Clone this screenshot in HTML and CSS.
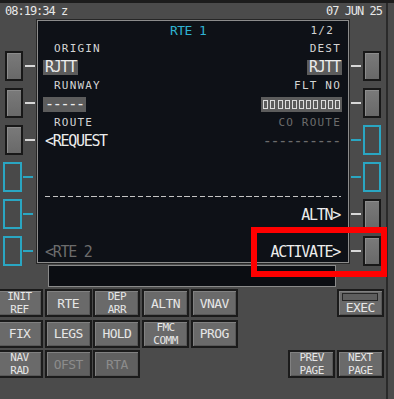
FILE: index.html
```html
<!DOCTYPE html>
<html lang="en">
<head>
  <meta charset="UTF-8">
  <title>FMC RTE 1</title>
  <link rel="stylesheet" href="styles.css">
</head>
<body>

  <div class="fmc">
    <div class="header">
      <span>08:19:34 z</span>
      <span class="date">07 JUN 25</span>
    </div>

    <div class="middle">
      <div class="lsk-col left">
        <div class="lsk"><span class="btn"></span><span class="tick"></span></div>
        <div class="lsk"><span class="btn"></span><span class="tick"></span></div>
        <div class="lsk"><span class="btn"></span><span class="tick"></span></div>
        <div class="lsk cyan"><span class="btn"></span><span class="tick"></span></div>
        <div class="lsk cyan"><span class="btn"></span><span class="tick"></span></div>
        <div class="lsk cyan"><span class="btn"></span><span class="tick"></span></div>
      </div>

      <div class="center">
        <div class="screen">
          <div class="row title">
            <span class="title-text">RTE 1</span>
            <span class="label page">1/2</span>
          </div>
          <div class="row">
            <span class="label indent">ORIGIN</span>
            <span class="label r">DEST</span>
          </div>
          <div class="row">
            <span class="data box">RJTT</span>
            <span class="data box r">RJTT</span>
          </div>
          <div class="row">
            <span class="label indent">RUNWAY</span>
            <span class="label r">FLT NO</span>
          </div>
          <div class="row">
            <span class="data box">-----</span>
            <span class="box squares r">
              <i></i><i></i><i></i><i></i><i></i><i></i><i></i><i></i><i></i><i></i><i></i>
            </span>
          </div>
          <div class="row">
            <span class="label indent">ROUTE</span>
            <span class="label r dim">CO ROUTE</span>
          </div>
          <div class="row">
            <span class="data">&lt;REQUEST</span>
            <span class="data r dim">----------</span>
          </div>
          <div class="row"></div>
          <div class="row"></div>
          <div class="row"><span class="dash-line"></span></div>
          <div class="row">
            <span class="data r">ALTN&gt;</span>
          </div>
          <div class="row"></div>
          <div class="row">
            <span class="data dim">&lt;RTE 2</span>
            <span class="data r">ACTIVATE&gt;</span>
          </div>
        </div>
        <div class="scratchpad"></div>
      </div>

      <div class="lsk-col right">
        <div class="lsk"><span class="tick"></span><span class="btn"></span></div>
        <div class="lsk"><span class="tick"></span><span class="btn"></span></div>
        <div class="lsk cyan"><span class="tick"></span><span class="btn"></span></div>
        <div class="lsk cyan"><span class="tick"></span><span class="btn"></span></div>
        <div class="lsk"><span class="tick"></span><span class="btn"></span></div>
        <div class="lsk"><span class="tick"></span><span class="btn"></span></div>
      </div>
    </div>

    <div class="keypad">
      <div class="key two"><span>INIT</span><span>REF</span></div>
      <div class="key">RTE</div>
      <div class="key two"><span>DEP</span><span>ARR</span></div>
      <div class="key">ALTN</div>
      <div class="key">VNAV</div>
      <div class="key exec"><span class="lamp"></span><span>EXEC</span></div>

      <div class="key">FIX</div>
      <div class="key">LEGS</div>
      <div class="key">HOLD</div>
      <div class="key two"><span>FMC</span><span>COMM</span></div>
      <div class="key">PROG</div>

      <div class="key two row3"><span>NAV</span><span>RAD</span></div>
      <div class="key off">OFST</div>
      <div class="key off">RTA</div>
      <div class="key two prev"><span>PREV</span><span>PAGE</span></div>
      <div class="key two"><span>NEXT</span><span>PAGE</span></div>
    </div>

    <div class="highlight"></div>
  </div>

</body>
</html>
```

FILE: styles.css
```css
* {
  box-sizing: border-box;
}

body {
  margin: 0;
  height: 399px;
  overflow: hidden;
  background: #4b4b4b;
  border-top: 3px solid #1c1c1c;
  font-family: 'DejaVu Sans Mono', monospace;
  color: #e8e8e8;
}

.fmc {
  position: relative;
  width: 388px;
  height: 396px;
  border-right: 2px solid #2a2a2a;
}

/* ---------- top line ---------- */
.header {
  height: 17px;
  display: flex;
  justify-content: space-between;
  padding: 0 4px 0 5px;
  font-size: 12px;
  line-height: 17px;
  letter-spacing: -1px;
}

/* ---------- screen + line select keys ---------- */
.middle {
  display: flex;
  align-items: flex-start;
}

.lsk-col {
  display: flex;
  flex-direction: column;
  gap: 7px;
  padding-top: 31px;
}

.lsk-col.left {
  width: 37px;
}

.lsk-col.right {
  flex: 1;
}

.lsk {
  height: 30px;
  display: flex;
  align-items: center;
}

.btn {
  width: 18px;
  height: 30px;
  background: linear-gradient(#7a7a7a, #696969);
  border: 2px solid #181818;
  box-shadow: inset 1px 1px 0 #8c8c8c;
}

.tick {
  width: 10px;
  height: 2px;
  background: #d8d8d8;
}

.left .btn {
  margin-left: 5px;
}

.left .tick {
  margin-left: 2px;
}

.right .tick {
  margin-left: 2px;
}

.right .btn {
  margin-left: 2px;
}

.lsk.cyan .btn {
  background: #494949;
  border: 2px solid #2aa6c2;
  box-shadow: none;
}

.lsk.cyan .tick {
  background: #2aa6c2;
}

.left .cyan .btn {
  margin-left: 3px;
  width: 19px;
}

.left .cyan .tick {
  margin-left: 1px;
}

.center {
  width: 312px;
}

.screen {
  display: grid;
  grid-template-rows: repeat(13, 18.5px);
  padding: 0 7px;
  background: #0e1117;
  border: 1px solid #8c8c8c;
  box-shadow: 0 0 0 1px #262626;
}

.row {
  display: flex;
  align-items: center;
  justify-content: space-between;
}

.title-text {
  margin-left: 125px;
  font-size: 13px;
  letter-spacing: -0.6px;
  color: #2fb2d2;
}

.label {
  font-size: 11px;
  letter-spacing: 1.2px;
  color: #d4d4d4;
}

.label.indent {
  padding-left: 9px;
}

.label.page {
  margin-right: 7px;
}

.data {
  font-size: 15px;
  letter-spacing: -1.3px;
  line-height: 18px;
  color: #ececec;
}

.r {
  margin-left: auto;
}

.data.r {
  margin-right: 1px;
}

.dim {
  color: #6c6c6c;
}

.box {
  display: inline-block;
  height: 15px;
  line-height: 15px;
  padding: 0 2px;
  margin-left: -2px;
  background: #5c5c5c;
}

.box.r {
  margin-right: -1px;
}

.squares {
  display: flex;
  align-items: center;
  gap: 2.2px;
  margin-right: -2px;
}

.squares i {
  width: 5px;
  height: 9px;
  border: 1px solid #dcdcdc;
}

.dash-line {
  flex: 1;
  height: 1px;
  background: repeating-linear-gradient(90deg, #c4c4c4 0 5px, transparent 5px 7.75px);
}

.scratchpad {
  width: 288px;
  height: 22px;
  margin: 2px 0 0 11px;
  background: #0b0d12;
  border: 1px solid #8a8a8a;
}

/* ---------- keypad ---------- */
.keypad {
  display: grid;
  grid-template-columns: repeat(8, 47px);
  grid-auto-rows: 28px;
  column-gap: 1.7px;
  row-gap: 2.5px;
  margin: 2.5px 0 0 -4px;
}

.key {
  display: flex;
  flex-direction: column;
  align-items: center;
  justify-content: center;
  text-align: center;
  background: #6a6a6a;
  border: 2px solid #1b1b1b;
  box-shadow: inset 1px 1px 0 #818181, inset -1px -1px 0 #575757;
  font-size: 13px;
  letter-spacing: -0.6px;
  color: #e6e6e6;
}

.key.two {
  font-size: 11px;
  line-height: 13px;
  letter-spacing: -0.5px;
}

.key.off {
  background: #606060;
  color: #8c8c8c;
}

.key.exec {
  grid-column: 8;
  justify-content: flex-start;
  line-height: 14px;
}

.lamp {
  width: 36px;
  height: 8px;
  margin-top: 2px;
  background: #5e5e5e;
  border: 1px solid #262626;
}

.key.row3 {
  grid-column: 1;
}

.key.prev {
  grid-column: 7;
}

/* red callout around ACTIVATE */
.highlight {
  position: absolute;
  left: 251px;
  top: 224px;
  width: 136px;
  height: 50px;
  border: 6px solid #ff0000;
}
```
